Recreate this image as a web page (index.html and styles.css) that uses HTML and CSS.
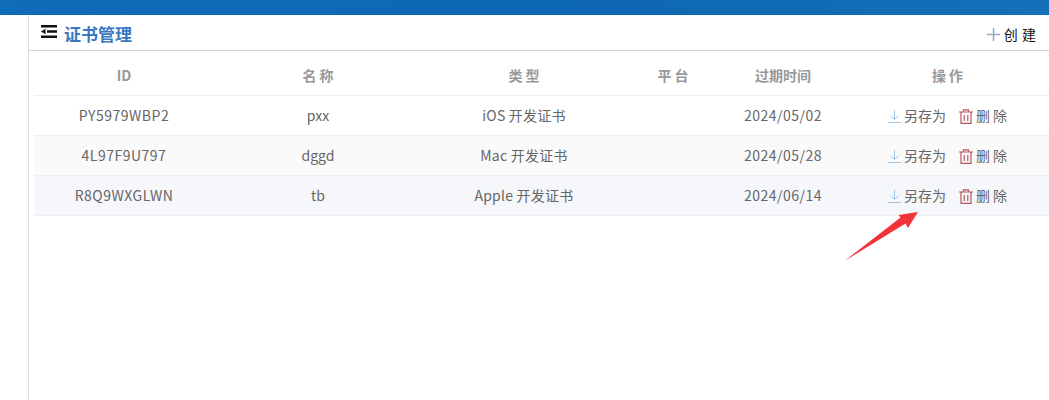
FILE: index.html
```html
<!DOCTYPE html>
<html lang="zh">
<head>
<meta charset="utf-8">
<title>证书管理</title>
<link rel="stylesheet" href="styles.css">
</head>
<body>
<div class="topbar"></div>
<div class="layout">
  <aside class="side"></aside>
  <main class="main">
    <header class="head">
      <div class="title">
        <svg class="menu-icon" width="16" height="13" viewBox="0 0 16 13"><path d="M0 0h16v2.500H0zM6 5.200h10v2.500H6zM0 10.500h16V13H0zM0 6.500l4.500-2.700v5.400z" fill="#111"/></svg>
        <span>证书管理</span>
      </div>
      <div class="create">
        <svg width="13" height="13" viewBox="0 0 13 13"><path d="M5.800 0h1.500v13H5.800zM0 5.800h13v1.500H0z" fill="#8fa9c9"/></svg>
        <span>创&nbsp;建</span>
      </div>
    </header>
    <div class="table">
      <div class="row hrow">
        <div>ID</div><div>名 称</div><div>类 型</div><div>平 台</div><div>过期时间</div><div>操 作</div>
      </div>
      <div class="row">
        <div class="wide">PY5979WBP2</div><div>pxx</div><div class="mid">iOS 开发证书</div><div></div><div class="wide">2024/05/02</div>
        <div class="ops">
          <span class="op save"><svg width="13" height="14" viewBox="0 0 13 14"><path d="M6.500 0v9M2.500 5.500l4 4 4-4" fill="none" stroke="#9cc6ea" stroke-width="1"/><path d="M0 12.500h13" stroke="#9cc6ea" stroke-width="1"/></svg>另存为</span>
          <span class="op del"><svg width="14" height="15" viewBox="0 0 14 15"><path d="M0 3h14M4.500 3V.8h5V3M2 3v11.300h10V3M5.200 6v6M8.800 6v6" fill="none" stroke="#b8565f" stroke-width="1.200"/></svg>删 除</span>
        </div>
      </div>
      <div class="row even">
        <div class="wide">4L97F9U797</div><div>dggd</div><div class="mid">Mac 开发证书</div><div></div><div class="wide">2024/05/28</div>
        <div class="ops">
          <span class="op save"><svg width="13" height="14" viewBox="0 0 13 14"><path d="M6.500 0v9M2.500 5.500l4 4 4-4" fill="none" stroke="#9cc6ea" stroke-width="1"/><path d="M0 12.500h13" stroke="#9cc6ea" stroke-width="1"/></svg>另存为</span>
          <span class="op del"><svg width="14" height="15" viewBox="0 0 14 15"><path d="M0 3h14M4.500 3V.8h5V3M2 3v11.300h10V3M5.200 6v6M8.800 6v6" fill="none" stroke="#b8565f" stroke-width="1.200"/></svg>删 除</span>
        </div>
      </div>
      <div class="row hover">
        <div class="wide">R8Q9WXGLWN</div><div>tb</div><div class="mid">Apple 开发证书</div><div></div><div class="wide">2024/06/14</div>
        <div class="ops">
          <span class="op save"><svg width="13" height="14" viewBox="0 0 13 14"><path d="M6.500 0v9M2.500 5.500l4 4 4-4" fill="none" stroke="#9cc6ea" stroke-width="1"/><path d="M0 12.500h13" stroke="#9cc6ea" stroke-width="1"/></svg>另存为</span>
          <span class="op del"><svg width="14" height="15" viewBox="0 0 14 15"><path d="M0 3h14M4.500 3V.8h5V3M2 3v11.300h10V3M5.200 6v6M8.800 6v6" fill="none" stroke="#b8565f" stroke-width="1.200"/></svg>删 除</span>
        </div>
      </div>
    </div>
  </main>
</div>
<svg class="arrow" width="76" height="52" viewBox="0 0 76 52"><path d="M0.500 51L56.500 7.500 54.500 5 74 2 64 18 61.500 13.500z" fill="#f0353a"/></svg>
</body>
</html>
```
FILE: styles.css
```css
* { box-sizing: border-box; }
html, body { margin: 0; height: 100%; overflow: hidden; background: #fff; }
body {
  font-family: "Noto Sans CJK SC", "Noto Sans", sans-serif;
  font-size: 14px;
  color: #666;
  position: relative;
}
.topbar { height: 15px; background: linear-gradient(90deg, #0f6cb7, #0e68b3 60%, #1470b8); }
.layout { display: flex; height: 385px; }
.side { width: 29px; border-right: 1px solid #dcdcdc; flex: none; }
.main { flex: 1; min-width: 0; }
.head {
  height: 36px;
  border-bottom: 1px solid #d2d2d2;
  display: flex;
  align-items: center;
  justify-content: space-between;
  padding: 2px 13px 0 12px;
}
.title {
  display: flex;
  align-items: center;
  gap: 7px;
  font-size: 17px;
  font-weight: 700;
  color: #3a78c0;
}
.menu-icon { margin-bottom: 4px; }
.create {
  display: flex;
  align-items: center;
  gap: 4px;
  font-size: 14px;
  color: #111;
  padding-top: 1px;
}
.create span { word-spacing: 1px; }
.table { margin-left: 5px; }
.row {
  display: grid;
  grid-template-columns: 180px 208px 204px 94px 126px 1fr;
  height: 40px;
  align-items: center;
  text-align: center;
  border-bottom: 1px solid #eeeeee;
  padding-bottom: 1px;
}
.hrow { height: 45px; font-weight: 700; color: #999; font-size: 14px; padding: 3px 0 0; }
.even { background: #fafafa; }
.hover { background: #f5f7fa; }
.wide { letter-spacing: 0.5px; }
.mid { letter-spacing: 0.25px; }
.ops { display: flex; justify-content: center; gap: 13px; }
.op { display: inline-flex; align-items: center; gap: 3px; }
.op svg { margin-top: 3px; }
.arrow { position: absolute; left: 844px; top: 210px; }
```
